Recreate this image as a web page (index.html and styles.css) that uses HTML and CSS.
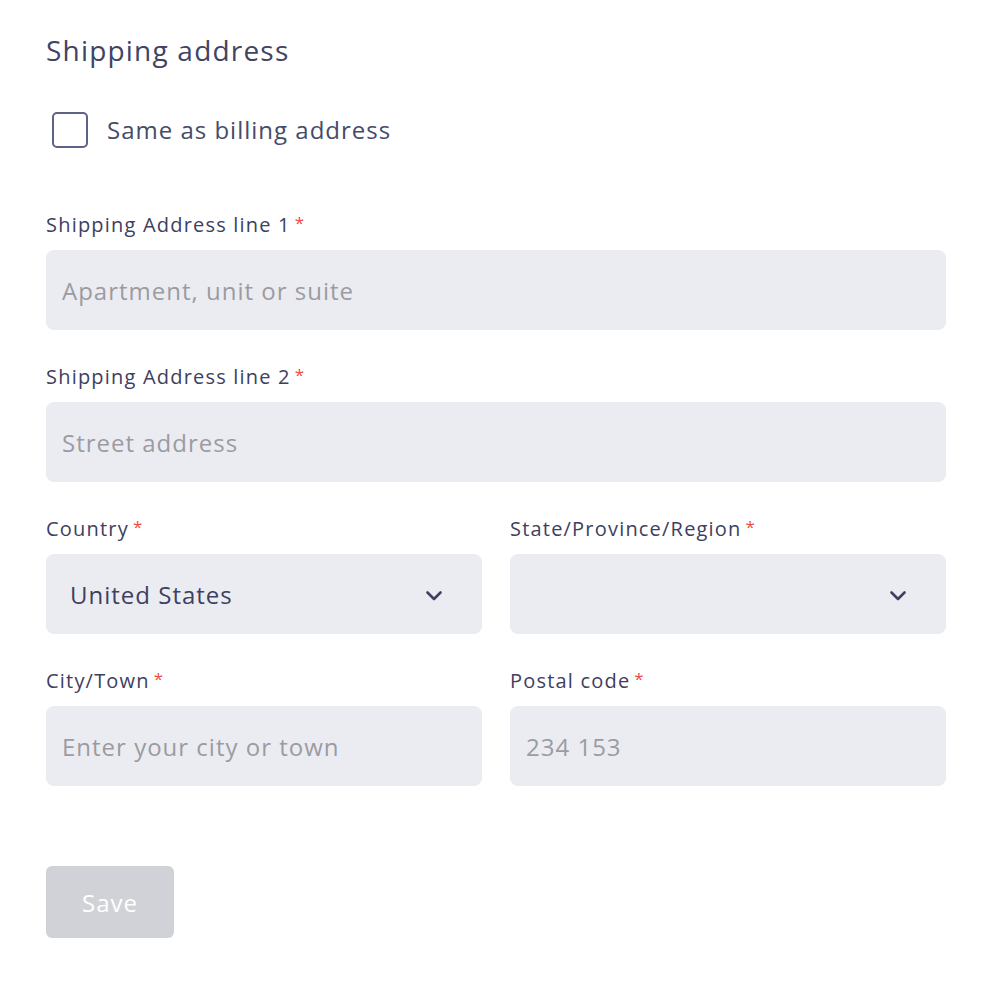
FILE: index.html
```html
<!DOCTYPE html>
<html lang="en">
<head>
    <meta charset="UTF-8">
    <meta name="viewport" content="width=device-width, initial-scale=1.0">
    <title>Shipping address</title>
    <link rel="stylesheet" href="styles.css">
</head>
<body>

<form class="shipping-form">
    <h1 class="form-title">Shipping address</h1>

    <label class="checkbox-row">
        <input type="checkbox" class="checkbox">
        <span>Same as billing address</span>
    </label>

    <div class="field">
        <label class="field-label" for="line1">Shipping Address line 1<span class="req">*</span></label>
        <input class="text-input" type="text" id="line1" placeholder="Apartment, unit or suite">
    </div>

    <div class="field">
        <label class="field-label" for="line2">Shipping Address line 2<span class="req">*</span></label>
        <input class="text-input" type="text" id="line2" placeholder="Street address">
    </div>

    <div class="field-row">
        <div class="field">
            <label class="field-label" for="country">Country<span class="req">*</span></label>
            <div class="select-wrap">
                <select class="select" id="country">
                    <option>United States</option>
                </select>
                <svg class="chevron" width="18" height="12" viewBox="0 0 18 12">
                    <path d="M2.5 2.5 L9 9 L15.5 2.5" fill="none" stroke="#3d4060" stroke-width="2.6" stroke-linecap="round" stroke-linejoin="round"/>
                </svg>
            </div>
        </div>
        <div class="field">
            <label class="field-label" for="region">State/Province/Region<span class="req">*</span></label>
            <div class="select-wrap">
                <select class="select" id="region">
                    <option></option>
                </select>
                <svg class="chevron" width="18" height="12" viewBox="0 0 18 12">
                    <path d="M2.5 2.5 L9 9 L15.5 2.5" fill="none" stroke="#3d4060" stroke-width="2.6" stroke-linecap="round" stroke-linejoin="round"/>
                </svg>
            </div>
        </div>
    </div>

    <div class="field-row">
        <div class="field">
            <label class="field-label" for="city">City/Town<span class="req">*</span></label>
            <input class="text-input" type="text" id="city" placeholder="Enter your city or town">
        </div>
        <div class="field">
            <label class="field-label" for="postal">Postal code<span class="req">*</span></label>
            <input class="text-input" type="text" id="postal" placeholder="234 153">
        </div>
    </div>

    <button type="button" class="save-button" disabled>Save</button>
</form>

</body>
</html>
```

FILE: styles.css
```css
body {
    font-family: "Open Sans", Lato, Arial, sans-serif;
    margin: 0;
    padding: 31px 42px 0 46px;
    background: #fff;
    color: #3d4060;
}

.shipping-form {
    display: flex;
    flex-direction: column;
    width: 900px;
}

.form-title {
    font-size: 28px;
    font-weight: 400;
    letter-spacing: 1.2px;
    line-height: 38px;
    margin: 0;
    color: #3f4463;
}

.checkbox-row {
    display: flex;
    align-items: center;
    gap: 19px;
    margin: 43px 0 0 6px;
    font-size: 24px;
    letter-spacing: 1px;
    line-height: 36px;
    color: #464b68;
}

.checkbox {
    appearance: none;
    -webkit-appearance: none;
    width: 36px;
    height: 36px;
    margin: 0;
    border: 2px solid #5d6286;
    border-radius: 5px;
    background: #fff;
}

.field {
    display: flex;
    flex-direction: column;
    flex: 1;
    margin-top: 35px;
}

.shipping-form > .field:first-of-type {
    margin-top: 65px;
}

.field-row {
    display: flex;
    gap: 28px;
}

.field-label {
    font-size: 20px;
    letter-spacing: 1.2px;
    line-height: 24px;
    height: 24px;
    margin-bottom: 13px;
    color: #3d4060;
}

.req {
    color: #ef4b3f;
    margin-left: 4px;
    font-size: 17px;
    line-height: 0;
    position: relative;
    top: -3px;
}

.text-input,
.select {
    box-sizing: border-box;
    height: 80px;
    width: 100%;
    border: none;
    border-radius: 8px;
    background: #ebecf1;
    font-family: inherit;
    font-size: 24px;
    letter-spacing: 1px;
    color: #3d4060;
    outline: none;
}

.text-input {
    padding: 0 16px;
}

.text-input::placeholder {
    color: #9b9ba1;
}

.select-wrap {
    position: relative;
}

.select {
    appearance: none;
    -webkit-appearance: none;
    padding: 0 24px;
}

.chevron {
    position: absolute;
    right: 39px;
    top: 36px;
    pointer-events: none;
}

.save-button {
    align-self: flex-start;
    margin-top: 80px;
    width: 128px;
    height: 72px;
    border: none;
    border-radius: 6px;
    background: #d1d2d8;
    color: #fff;
    font-family: inherit;
    font-size: 24px;
    letter-spacing: 1px;
}
```
